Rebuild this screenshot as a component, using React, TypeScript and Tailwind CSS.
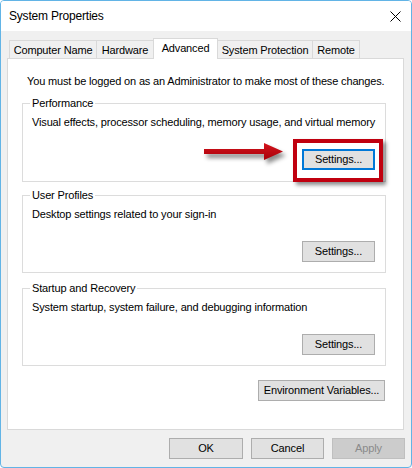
import React from 'react';

const font = { fontFamily: '"Liberation Sans", Arial, sans-serif' };

const tabs = [
  { label: 'Computer Name', w: 'w-[88px]' },
  { label: 'Hardware', w: 'w-[58px]' },
  { label: 'Advanced', w: 'w-[65px]', active: true },
  { label: 'System Protection', w: 'w-[96px]' },
  { label: 'Remote', w: 'w-[48px]' },
];

const WinButton: React.FC<{ label: string; className?: string; disabled?: boolean; focused?: boolean }> = ({
  label,
  className = 'w-[73px]',
  disabled,
  focused,
}) => (
  <button
    className={`h-[21px] ${className} flex items-center justify-center text-[11px] tracking-[-0.15px] leading-none whitespace-nowrap ${
      disabled
        ? 'bg-[#cccccc] border border-[#bfbfbf] text-[#8a8a8a]'
        : focused
        ? 'bg-[#e1e1e1] border-2 border-[#0078d7] text-black'
        : 'bg-[#e1e1e1] border border-[#adadad] text-black'
    }`}
  >
    {label}
  </button>
);

const GroupBox: React.FC<{ title: string; desc: string; className?: string; focused?: boolean }> = ({
  title,
  desc,
  className = '',
  focused,
}) => (
  <fieldset className={`w-[364px] border border-[#dcdcdc] pl-[9px] pr-[10px] ${className}`}>
    <legend className="px-[2px] -ml-[2px] text-[11px] tracking-[-0.15px] leading-[14px] text-black whitespace-nowrap">
      {title}
    </legend>
    <div className="mt-[4px] text-[11px] tracking-[-0.15px] leading-[16px] text-black whitespace-nowrap">{desc}</div>
    <div className="mt-[19px] flex justify-end">
      <WinButton label="Settings..." focused={focused} />
    </div>
  </fieldset>
);

export default function App() {
  return (
    <div
      style={font}
      className="relative w-[412px] h-[468px] bg-[#f0f0f0] border border-[#62b4e6] rounded-[4px] overflow-hidden flex flex-col"
    >
      {/* title bar */}
      <div className="h-[30px] bg-white flex items-center justify-between pl-[8px] pr-[9px] shrink-0">
        <span className="text-[12px] tracking-[-0.2px] text-black">System Properties</span>
        <svg width="11" height="11" viewBox="0 0 11 11" className="mr-[1px]">
          <path d="M0.5 0.5 L10.5 10.5 M10.5 0.5 L0.5 10.5" stroke="#000" strokeWidth="1" fill="none" />
        </svg>
      </div>

      <div className="flex-1 flex flex-col pl-[6px] pt-[7px]">
        {/* tabs */}
        <div className="h-[20px] flex items-end pl-[2px]">
          {tabs.map((t, i) =>
            t.active ? (
              <div
                key={t.label}
                className={`${t.w} h-[21px] -mb-px -ml-px relative z-10 bg-white border-t border-x border-[#d9d9d9] flex items-start justify-center pt-[1px] text-[11px] tracking-[-0.15px] leading-[16px] text-black whitespace-nowrap`}
              >
                {t.label}
              </div>
            ) : (
              <div
                key={t.label}
                className={`${t.w} h-[18px] ${i > 0 ? '-ml-px' : ''} bg-[#f0f0f0] border-t border-x border-[#d9d9d9] flex items-center justify-center text-[11px] tracking-[-0.15px] leading-[16px] text-black whitespace-nowrap`}
              >
                {t.label}
              </div>
            )
          )}
        </div>

        {/* tab panel */}
        <div className="w-[397px] h-[372px] bg-white border border-[#d9d9d9] pl-[14px] pt-[14px] flex flex-col">
          <div className="pl-[5px] text-[11px] tracking-[-0.15px] leading-[16px] text-black whitespace-nowrap">
            You must be logged on as an Administrator to make most of these changes.
          </div>
          <GroupBox
            className="mt-[7px] pb-[11px]"
            title="Performance"
            desc="Visual effects, processor scheduling, memory usage, and virtual memory"
            focused
          />
          <GroupBox className="mt-[6px] pb-[10px]" title="User Profiles" desc="Desktop settings related to your sign-in" />
          <GroupBox
            className="mt-[8px] pb-[10px]"
            title="Startup and Recovery"
            desc="System startup, system failure, and debugging information"
          />
          <div className="w-[364px] mt-[14px] flex justify-end pr-[1px]">
            <WinButton label="Environment Variables..." className="w-[127px]" />
          </div>
        </div>

        {/* footer */}
        <div className="flex justify-end gap-[8px] pt-[8px] pr-[6px]">
          <WinButton label="OK" className="w-[74px]" />
          <WinButton label="Cancel" className="w-[73px]" />
          <WinButton label="Apply" className="w-[73px]" disabled />
        </div>
      </div>

      {/* annotation: arrow */}
      <svg
        width="92"
        height="30"
        viewBox="0 0 92 30"
        className="absolute left-[200px] top-[137px]"
        style={{ filter: 'drop-shadow(3px 4px 2px rgba(0,0,0,0.45))' }}
      >
        <defs>
          <linearGradient id="shaft" x1="0" y1="0" x2="0" y2="1">
            <stop offset="0" stopColor="#d4141c" />
            <stop offset="1" stopColor="#a8000a" />
          </linearGradient>
        </defs>
        <path d="M3 11 L63 11 L63 5 L82 13.5 L63 22 L63 16 L3 16 Z" fill="url(#shaft)" />
      </svg>

      {/* annotation: highlight box */}
      <div className="absolute left-[292px] top-[138px] w-[90px] h-[43px] border-[4px] border-[#c0000f] shadow-[3px_3px_4px_rgba(0,0,0,0.45)]" />
    </div>
  );
}
